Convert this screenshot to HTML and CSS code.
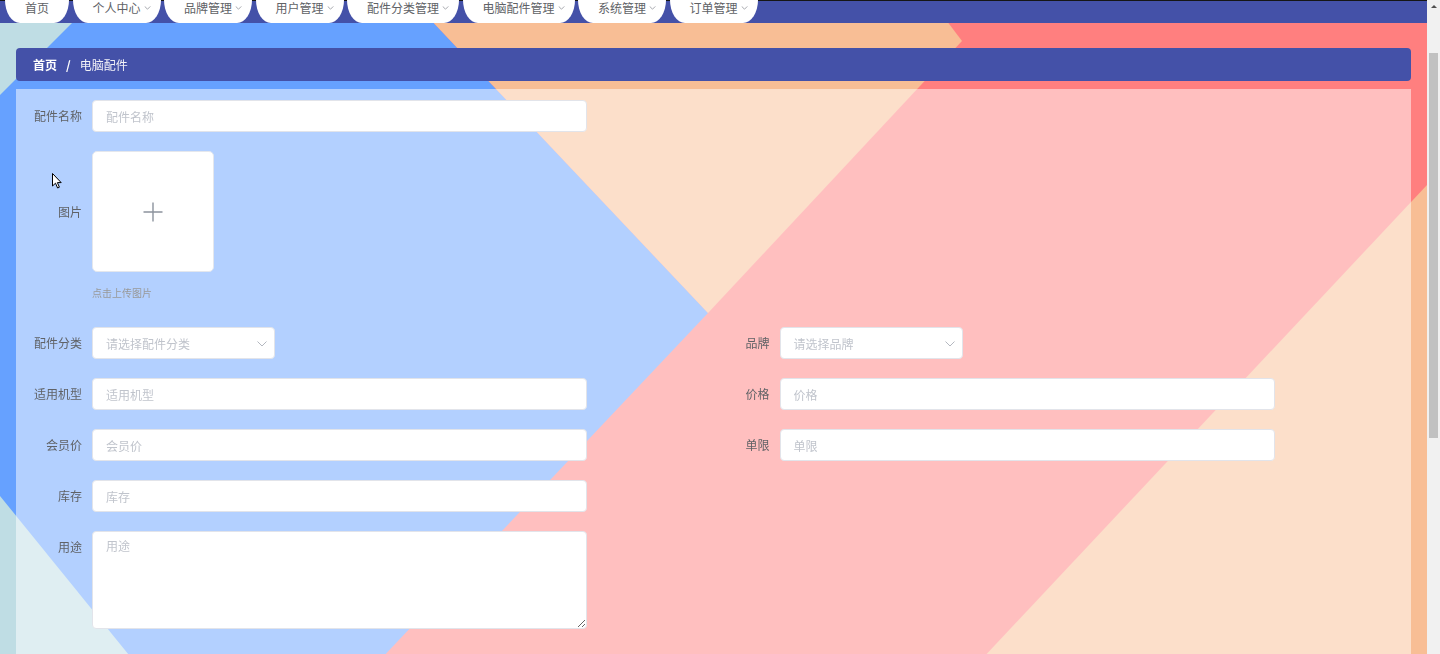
FILE: index.html
```html
<!DOCTYPE html>
<html lang="zh-CN">
<head>
<meta charset="utf-8">
<title>电脑配件</title>
<link rel="stylesheet" href="styles.css">
</head>
<body>
<div class="page">
  <svg class="bg" viewBox="0 0 1427 654" preserveAspectRatio="none" aria-hidden="true">
    <rect x="0" y="0" width="1427" height="654" fill="#ff7f7f"/>
    <polygon points="0,0 412,0 708,313 380,660 0,660" fill="#66a1ff"/>
    <polygon points="412,0 931,0 962,41 708,313" fill="#f8be95"/>
    <polygon points="0,0 95,0 0,95" fill="#bfdde4"/>
    <polygon points="0,496 133,660 0,660" fill="#bfdde4"/>
    <polygon points="1427,185 1427,660 981,660" fill="#f8be95"/>
  </svg>

  <header class="topnav">
    <ul class="menu">
      <li class="menu-item">首页</li>
      <li class="menu-item">个人中心<svg class="arrow" viewBox="0 0 8 5"><path d="M0.5 0.5 L4 4 L7.5 0.5"/></svg></li>
      <li class="menu-item">品牌管理<svg class="arrow" viewBox="0 0 8 5"><path d="M0.5 0.5 L4 4 L7.5 0.5"/></svg></li>
      <li class="menu-item">用户管理<svg class="arrow" viewBox="0 0 8 5"><path d="M0.5 0.5 L4 4 L7.5 0.5"/></svg></li>
      <li class="menu-item">配件分类管理<svg class="arrow" viewBox="0 0 8 5"><path d="M0.5 0.5 L4 4 L7.5 0.5"/></svg></li>
      <li class="menu-item">电脑配件管理<svg class="arrow" viewBox="0 0 8 5"><path d="M0.5 0.5 L4 4 L7.5 0.5"/></svg></li>
      <li class="menu-item">系统管理<svg class="arrow" viewBox="0 0 8 5"><path d="M0.5 0.5 L4 4 L7.5 0.5"/></svg></li>
      <li class="menu-item">订单管理<svg class="arrow" viewBox="0 0 8 5"><path d="M0.5 0.5 L4 4 L7.5 0.5"/></svg></li>
    </ul>
  </header>

  <main class="main">
    <nav class="crumb">
      <span class="crumb-home">首页</span>
      <span class="crumb-sep">/</span>
      <span class="crumb-cur">电脑配件</span>
    </nav>

    <form class="panel">
      <div class="grid">
        <div class="item full">
          <label class="label">配件名称</label>
          <input class="input" type="text" placeholder="配件名称">
        </div>

        <div class="item full">
          <label class="label label-tall">图片</label>
          <div class="upload-wrap">
            <div class="upload">
              <svg class="plus" viewBox="0 0 20 20"><path d="M10 0.5 V19.5 M0.5 10 H19.5"/></svg>
            </div>
            <div class="hint">点击上传图片</div>
          </div>
        </div>

        <div class="item">
          <label class="label">配件分类</label>
          <div class="select">
            <input class="input input-select" type="text" readonly placeholder="请选择配件分类">
            <svg class="select-arrow" viewBox="0 0 10 6"><path d="M0.5 0.5 L5 5 L9.5 0.5"/></svg>
          </div>
        </div>
        <div class="item">
          <label class="label">品牌</label>
          <div class="select">
            <input class="input input-select" type="text" readonly placeholder="请选择品牌">
            <svg class="select-arrow" viewBox="0 0 10 6"><path d="M0.5 0.5 L5 5 L9.5 0.5"/></svg>
          </div>
        </div>

        <div class="item">
          <label class="label">适用机型</label>
          <input class="input" type="text" placeholder="适用机型">
        </div>
        <div class="item">
          <label class="label">价格</label>
          <input class="input" type="text" placeholder="价格">
        </div>

        <div class="item">
          <label class="label">会员价</label>
          <input class="input" type="text" placeholder="会员价">
        </div>
        <div class="item">
          <label class="label">单限</label>
          <input class="input" type="text" placeholder="单限">
        </div>

        <div class="item full">
          <label class="label">库存</label>
          <input class="input" type="text" placeholder="库存">
        </div>

        <div class="item full">
          <label class="label">用途</label>
          <textarea class="textarea" placeholder="用途"></textarea>
        </div>
      </div>
    </form>
  </main>

  <svg class="cursor" viewBox="0 0 10 16" aria-hidden="true"><path d="M0.5 0.5 L0.5 13 L3.5 10.2 L5.6 15 L7.4 14.2 L5.4 9.6 L9.2 9.6 Z"/></svg>
</div>

<div class="scrollbar" aria-hidden="true">
  <div class="sb-up"><span class="sb-tri"></span></div>
  <div class="sb-thumb"></div>
</div>
</body>
</html>
```

FILE: styles.css
```css
html, body {
  margin: 0;
  padding: 0;
}

body {
  display: flex;
  align-items: flex-start;
  font-family: "Noto Sans CJK SC", "Microsoft YaHei", sans-serif;
  font-size: 12px;
  color: #606266;
}

.page {
  position: relative;
  flex: 1;
  min-width: 0;
}

.bg {
  position: fixed;
  left: 0;
  top: 0;
  width: calc(100% - 13px);
  height: 100vh;
  z-index: 0;
  display: block;
}

/* imitation of the browser's vertical scrollbar */
.scrollbar {
  position: sticky;
  top: 0;
  flex-shrink: 0;
  width: 13px;
  height: 100vh;
  background: #f1f1f1;
  z-index: 3;
}

.sb-up {
  display: flex;
  justify-content: center;
  height: 17px;
}

.sb-tri {
  width: 0;
  height: 0;
  margin-top: 5px;
  border-left: 3px solid transparent;
  border-right: 3px solid transparent;
  border-bottom: 3px solid #505050;
}

.sb-thumb {
  height: 385px;
  margin: 36px 2px 0;
  background: #c1c1c1;
}

.topnav {
  position: relative;
  z-index: 1;
  height: 23px;
  background: #4451a8;
  box-shadow: inset 0 1px 0 #161616;
  overflow: hidden;
}

.menu {
  display: flex;
  gap: 3.5px;
  margin: 0;
  padding: 0 0 0 5px;
  list-style: none;
  height: 100%;
}

.menu-item {
  display: flex;
  align-items: flex-start;
  box-sizing: border-box;
  height: 23px;
  padding: 1px 20px 0;
  background: #fff;
  color: #606266;
  line-height: 14px;
  white-space: nowrap;
  border-radius: 0 0 15px 15px / 0 0 23px 23px;
}

.arrow {
  width: 7px;
  height: 4px;
  margin: 5px -10px 0 3px;
  fill: none;
  stroke: #909399;
  stroke-width: 1;
  flex-shrink: 0;
}

.main {
  position: relative;
  z-index: 1;
  padding: 25px 16px 0;
}

.crumb {
  display: flex;
  align-items: center;
  height: 33px;
  padding-left: 17px;
  background: #4451a8;
  border-radius: 4px;
  color: #fff;
  font-size: 12px;
}

.crumb-home {
  font-weight: 700;
}

.crumb-sep {
  margin: 0 9px;
  font-weight: 700;
}

.crumb-cur {
  color: #f2f2f7;
}

.panel {
  box-sizing: border-box;
  min-height: 993px;
  margin-top: 8px;
  padding: 11px 10px;
  background: rgba(255, 255, 255, 0.5);
}

.grid {
  display: grid;
  grid-template-columns: 1fr 1fr;
}

.item {
  display: flex;
  align-items: flex-start;
  margin-bottom: 19px;
}

.full {
  grid-column: 1 / -1;
}

.label {
  flex-shrink: 0;
  box-sizing: border-box;
  width: 66px;
  padding-right: 10px;
  text-align: right;
  line-height: 32px;
  color: #606266;
}

.label-tall {
  line-height: 121px;
}

.input {
  box-sizing: border-box;
  width: 495px;
  height: 32px;
  padding: 0 13px;
  border: 1px solid #e2e4ea;
  border-radius: 4px;
  background: #fff;
  font: inherit;
  font-size: 12px;
  color: #606266;
  outline: none;
}

.input::placeholder,
.textarea::placeholder {
  color: #c0c4cc;
}

.select {
  position: relative;
  width: 183px;
}

.input-select {
  width: 183px;
  padding-right: 30px;
  cursor: pointer;
}

.select-arrow {
  position: absolute;
  right: 8px;
  top: 14px;
  width: 10px;
  height: 6px;
  fill: none;
  stroke: #b4b8c0;
  stroke-width: 1;
}

.upload-wrap {
  padding-bottom: 8px;
}

.upload {
  box-sizing: border-box;
  display: flex;
  align-items: center;
  justify-content: center;
  width: 122px;
  height: 121px;
  border: 1px solid #e4e7ed;
  border-radius: 5px;
  background: #fff;
}

.plus {
  width: 20px;
  height: 20px;
  fill: none;
  stroke: #8c939d;
  stroke-width: 1.4;
}

.hint {
  margin-top: 14px;
  font-size: 10px;
  line-height: 14px;
  color: #999;
}

.textarea {
  box-sizing: border-box;
  display: block;
  width: 495px;
  height: 98px;
  padding: 5px 13px;
  border: 1px solid #e2e4ea;
  border-radius: 4px;
  background: #fff;
  font: inherit;
  font-size: 12px;
  line-height: 18px;
  color: #606266;
  outline: none;
}

.cursor {
  position: absolute;
  left: 52px;
  top: 173px;
  z-index: 2;
  width: 10px;
  height: 16px;
  fill: #fff;
  stroke: #000;
  stroke-width: 1;
  stroke-linejoin: round;
}
```
